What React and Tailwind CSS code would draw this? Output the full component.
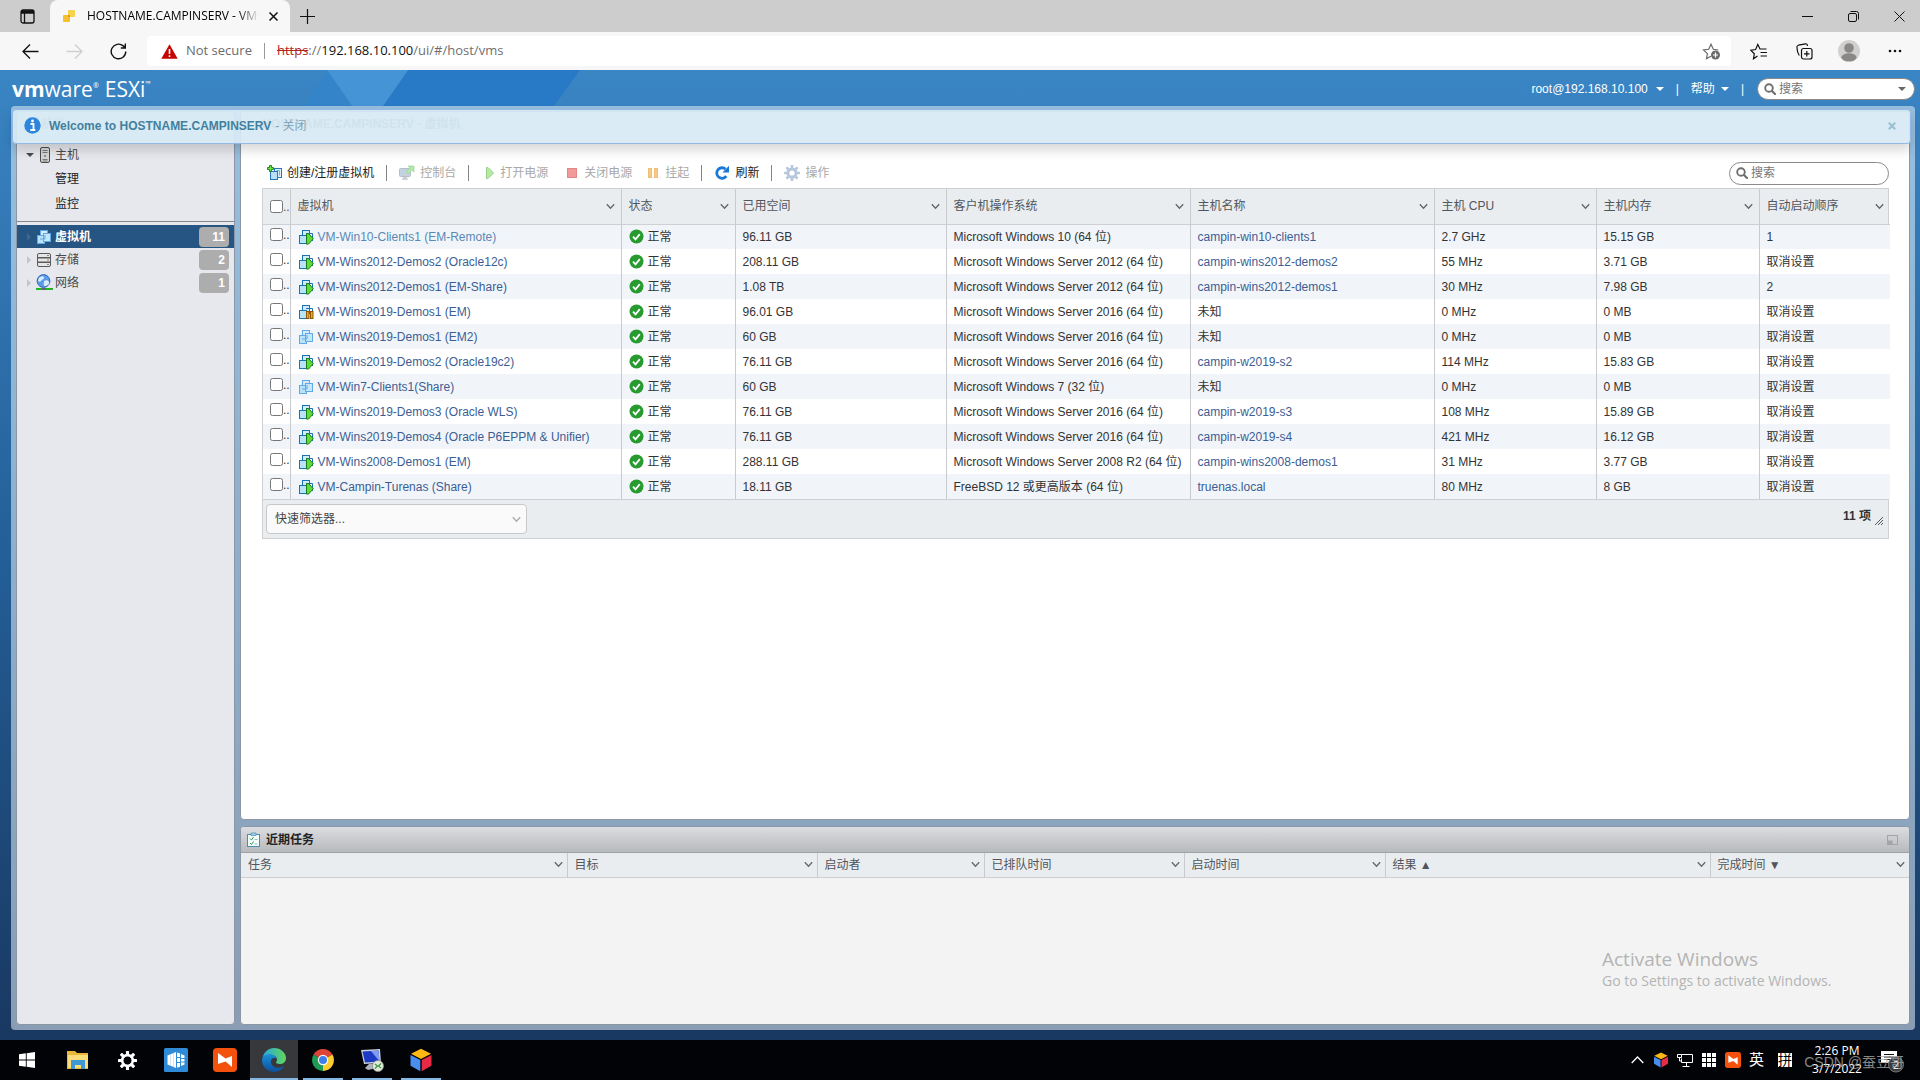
import React from "react";

const vms = [
  ["VM-Win10-Clients1 (EM-Remote)", "on", "96.11 GB", "Microsoft Windows 10 (64 位)", "campin-win10-clients1", "2.7 GHz", "15.15 GB", "1"],
  ["VM-Wins2012-Demos2 (Oracle12c)", "on", "208.11 GB", "Microsoft Windows Server 2012 (64 位)", "campin-wins2012-demos2", "55 MHz", "3.71 GB", "取消设置"],
  ["VM-Wins2012-Demos1 (EM-Share)", "on", "1.08 TB", "Microsoft Windows Server 2012 (64 位)", "campin-wins2012-demos1", "30 MHz", "7.98 GB", "2"],
  ["VM-Wins2019-Demos1 (EM)", "paused", "96.01 GB", "Microsoft Windows Server 2016 (64 位)", "未知", "0 MHz", "0 MB", "取消设置"],
  ["VM-Wins2019-Demos1 (EM2)", "off", "60 GB", "Microsoft Windows Server 2016 (64 位)", "未知", "0 MHz", "0 MB", "取消设置"],
  ["VM-Wins2019-Demos2 (Oracle19c2)", "on", "76.11 GB", "Microsoft Windows Server 2016 (64 位)", "campin-w2019-s2", "114 MHz", "15.83 GB", "取消设置"],
  ["VM-Win7-Clients1(Share)", "off", "60 GB", "Microsoft Windows 7 (32 位)", "未知", "0 MHz", "0 MB", "取消设置"],
  ["VM-Wins2019-Demos3 (Oracle WLS)", "on", "76.11 GB", "Microsoft Windows Server 2016 (64 位)", "campin-w2019-s3", "108 MHz", "15.89 GB", "取消设置"],
  ["VM-Wins2019-Demos4 (Oracle P6EPPM & Unifier)", "on", "76.11 GB", "Microsoft Windows Server 2016 (64 位)", "campin-w2019-s4", "421 MHz", "16.12 GB", "取消设置"],
  ["VM-Wins2008-Demos1 (EM)", "on", "288.11 GB", "Microsoft Windows Server 2008 R2 (64 位)", "campin-wins2008-demos1", "31 MHz", "3.77 GB", "取消设置"],
  ["VM-Campin-Turenas (Share)", "on", "18.11 GB", "FreeBSD 12 或更高版本 (64 位)", "truenas.local", "80 MHz", "8 GB", "取消设置"],
];

const vmColumns = [
  ["虚拟机", "w-[331px]"],
  ["状态", "w-[114px]"],
  ["已用空间", "w-[211px]"],
  ["客户机操作系统", "w-[244px]"],
  ["主机名称", "w-[244px]"],
  ["主机 CPU", "w-[162px]"],
  ["主机内存", "w-[163px]"],
  ["自动启动顺序", "w-[131px]"],
];

const taskColumns = [
  ["任务", "w-[326px]"],
  ["目标", "w-[250px]"],
  ["启动者", "w-[167px]"],
  ["已排队时间", "w-[200px]"],
  ["启动时间", "w-[201px]"],
  ["结果 ▲", "w-[325px]"],
  ["完成时间 ▼", "w-[199px]"],
];

/* ---------- icons ---------- */

function VmIcon({ state = "off" }) {
  const stroke = state === "off" ? "#62a8e6" : "#1a73b4";
  return (
    <svg width="16" height="16" viewBox="0 0 16 16" className="shrink-0" aria-hidden="true">
      <rect x="4.500" y="1.500" width="7" height="8" fill="#d3ecfb" stroke={stroke} />
      <rect x="1.500" y="6.500" width="7" height="8" fill="#b9e3f7" stroke={stroke} />
      {state === "off" ? (
        <g>
          <rect x="7.500" y="4.500" width="7" height="8" fill="#c3e8fa" stroke={stroke} />
          <path d="M4 10h5V6" fill="none" stroke={stroke} />
        </g>
      ) : (
        <path d="M8 4.500h6.500V12" fill="none" stroke={stroke} />
      )}
      {state === "on" && <path d="M8.500 4.500h2l4.800 5.200-4.800 5.400h-2z" fill="#5fdc35" stroke="#1a7d1a" />}
      {state === "paused" && (
        <g fill="#f6a71c" stroke="#8d5606">
          <rect x="8.500" y="7.500" width="2.500" height="7" />
          <rect x="12.500" y="7.500" width="2.500" height="7" />
        </g>
      )}
    </svg>
  );
}

function CreateVmIcon() {
  return (
    <svg width="15" height="16" viewBox="0 0 15 16" aria-hidden="true">
      <rect x="7.500" y="3.500" width="7" height="9" fill="#dff1fc" stroke="#2576b8" />
      <rect x="3.500" y="6.500" width="7" height="8" fill="#b9e0f8" stroke="#2576b8" />
      <path d="M9.500 5.500h3v5" fill="none" stroke="#6eb2e4" />
      <path d="M2.500.5h2v2h2v2h-2v2h-2v-2h-2v-2h2z" fill="#72e04c" stroke="#1f8a1f" />
    </svg>
  );
}

function ConsoleIcon() {
  return (
    <svg width="16" height="16" viewBox="0 0 16 16" className="opacity-60" aria-hidden="true">
      <rect x=".5" y="3.500" width="11" height="8" rx="1" fill="#9db4c9" stroke="#8796a5" />
      <path d="M4 12h4l1 3H3z" fill="#a9b4be" />
      <path d="M9 1h6v6l-2-2-4 4-2-2 4-4z" fill="#7ade6e" stroke="#5cb85c" strokeWidth=".7" />
    </svg>
  );
}

function RefreshIcon() {
  return (
    <svg width="16" height="16" viewBox="0 0 16 16" aria-hidden="true">
      <path d="M12.300 11.200A5.300 5.300 0 1 1 11.500 4" fill="none" stroke="#1c78d6" strokeWidth="2.800" />
      <path d="M15 .8v6.700H8.400z" fill="#1c78d6" />
    </svg>
  );
}

function GearIcon({ color, size = 16, hole = 2.6 }) {
  return (
    <svg width={size} height={size} viewBox="0 0 16 16" aria-hidden="true">
      <g fill={color}>
        {[0, 45, 90, 135].map((a) => (
          <rect key={a} x="6.700" y="0" width="2.600" height="16" rx=".5" transform={"rotate(" + a + " 8 8)"} mask="url(#gear-hole)" />
        ))}
      </g>
      <circle cx="8" cy="8" r={(hole + 5.6) / 2} fill="none" stroke={color} strokeWidth={5.6 - hole} />
      <mask id="gear-hole" maskUnits="userSpaceOnUse" x="-8" y="-8" width="32" height="32">
        <rect x="-8" y="-8" width="32" height="32" fill="#fff" />
        <circle cx="8" cy="8" r="3.500" fill="#000" />
      </mask>
    </svg>
  );
}

function OkIcon() {
  return (
    <svg width="15" height="15" viewBox="0 0 15 15" className="shrink-0" aria-hidden="true">
      <circle cx="7.500" cy="7.500" r="7" fill="#279a30" />
      <path d="M4 7.600l2.500 2.700 4.300-5.200" fill="none" stroke="#fff" strokeWidth="1.800" />
    </svg>
  );
}

function Chevron({ className = "" }) {
  return (
    <svg width="9" height="7" viewBox="0 0 9 7" className={"shrink-0 " + className} aria-hidden="true">
      <path d="M.8 1.300l3.700 4 3.700-4" fill="none" stroke="currentColor" strokeWidth="1.300" />
    </svg>
  );
}

function SearchIcon() {
  return (
    <svg width="12" height="12" viewBox="0 0 12 12" className="shrink-0" aria-hidden="true">
      <circle cx="5" cy="5" r="3.800" fill="none" stroke="#6f6f6f" strokeWidth="1.900" />
      <path d="M8 8l3 3" stroke="#6f6f6f" strokeWidth="2.200" strokeLinecap="round" />
    </svg>
  );
}

function Caret({ className = "" }) {
  return (
    <svg width="8" height="4" viewBox="0 0 8 4" className={"shrink-0 " + className} aria-hidden="true">
      <path d="M0 0h8L4 4z" fill="currentColor" />
    </svg>
  );
}

function CubeIcon({ size }) {
  return (
    <svg width={size} height={size} viewBox="0 0 24 24" aria-hidden="true">
      <path d="M12 .8l10 5-10 5.200-10-5.200z" fill="#fdb813" />
      <path d="M1.500 7l9.800 5v11.300l-9.800-5.600z" fill="#4a8df0" />
      <path d="M22.500 7l-9.800 5v11.300l9.800-5.600z" fill="#e92a45" />
    </svg>
  );
}

function TodeskIcon({ size }) {
  return (
    <svg width={size} height={size} viewBox="0 0 24 24" aria-hidden="true">
      <rect width="24" height="24" rx="4" fill="#f4520c" />
      <path d="M5 5l7.500 5.500L19 8v11l-6.500-5.500L5 16z" fill="#fff" />
    </svg>
  );
}

function MonitorIcon() {
  return (
    <svg width="17" height="15" viewBox="0 0 17 15" fill="none" stroke="#fff" aria-hidden="true">
      <path d="M4.500 1.500h11v8h-11v-4M9.500 9.500v3.500M5.500 13.500h7" />
      <path d="M.5 1.500h4v3h-4zM2.500 4.500v3.500h2" />
    </svg>
  );
}

/* ---------- browser chrome ---------- */

function TabStrip() {
  return (
    <div className="flex h-8 items-stretch bg-[#cdcdcd] text-black">
      <button aria-label="Tab actions" className="flex w-[50px] items-center justify-center pl-1">
        <svg width="15" height="15" viewBox="0 0 15 15" fill="none" stroke="#111" strokeWidth="1.300">
          <rect x="1" y="1" width="13" height="13" rx="2" />
          <path d="M1 3h13" strokeWidth="3.500" />
          <path d="M4.500 4v10" />
        </svg>
      </button>
      <div className="flex w-60 items-center rounded-t-lg bg-[#f7f7f7] pr-2.5 pl-3">
        <svg width="14" height="14" viewBox="0 0 14 14" className="shrink-0" aria-hidden="true">
          <rect x="6" y="1" width="7" height="7" rx="1" fill="#f8d24c" />
          <rect x="1" y="6" width="7" height="7" rx="1" fill="#f5c02e" />
          <rect x="6" y="6" width="2" height="2" fill="#e09a10" />
        </svg>
        <span className="ml-[11px] min-w-0 flex-1 overflow-hidden text-xs whitespace-nowrap [mask-image:linear-gradient(to_right,black_88%,transparent)]">
          HOSTNAME.CAMPINSERV - VMware ESXi
        </span>
        <button aria-label="Close tab" className="ml-2 p-0.5">
          <svg width="9" height="9" viewBox="0 0 9 9" stroke="#111" strokeWidth="1.500">
            <path d="M.5.5l8 8M8.500.5l-8 8" />
          </svg>
        </button>
      </div>
      <button aria-label="New tab" className="flex w-[34px] items-center justify-center">
        <svg width="15" height="15" viewBox="0 0 15 15" stroke="#111" strokeWidth="1.200">
          <path d="M7.500 0v15M0 7.500h15" />
        </svg>
      </button>
      <div className="ml-auto flex">
        <button aria-label="Minimize" className="flex w-[46px] items-center justify-center pl-1">
          <svg width="11" height="11" viewBox="0 0 11 11" stroke="#111"><path d="M0 5.500h11" /></svg>
        </button>
        <button aria-label="Restore" className="flex w-[46px] items-center justify-center pl-1">
          <svg width="11" height="11" viewBox="0 0 11 11" fill="none" stroke="#111">
            <rect x=".5" y="2.500" width="8" height="8" rx="1.500" />
            <path d="M2.500.5h6a2 2 0 0 1 2 2v6" />
          </svg>
        </button>
        <button aria-label="Close" className="flex w-[46px] items-center justify-center pl-1">
          <svg width="11" height="11" viewBox="0 0 11 11" stroke="#111"><path d="M.5.5l10 10M10.500.5l-10 10" /></svg>
        </button>
      </div>
    </div>
  );
}

function AddressBar() {
  return (
    <div className="flex h-[38px] items-center bg-[#f7f7f7] pr-0.5">
      <button aria-label="Back" className="flex w-12 items-center justify-center pl-3">
        <svg width="17" height="15" viewBox="0 0 17 15" fill="none" stroke="#111" strokeWidth="1.300">
          <path d="M16.500 7.500H1M8 .5l-7 7 7 7" />
        </svg>
      </button>
      <button aria-label="Forward" className="flex w-12 items-center justify-center pl-1">
        <svg width="17" height="15" viewBox="0 0 17 15" fill="none" stroke="#cfcfcf" strokeWidth="1.300">
          <path d="M.5 7.500H16M9 .5l7 7-7 7" />
        </svg>
      </button>
      <button aria-label="Reload" className="flex w-12 items-center justify-center pr-1">
        <svg width="17" height="17" viewBox="0 0 17 17" fill="none" stroke="#111" strokeWidth="1.400">
          <path d="M15.800 8.500a7.300 7.300 0 1 1-2.600-5.600L15 4.500M15.300.5v4.500h-4.500" />
        </svg>
      </button>
      <div className="ml-[3px] flex h-[30px] flex-1 items-center rounded bg-white pr-[11px] pl-3.5 text-[13px]">
        <svg width="17" height="15" viewBox="0 0 17 15" className="shrink-0" aria-hidden="true">
          <path d="M8.500.3l8.200 14.400H.3z" fill="#c50500" />
          <path d="M8.500 5v5M8.500 11.300v1.800" stroke="#fff" strokeWidth="1.600" />
        </svg>
        <span className="ml-2 text-[#6b6b6b]">Not secure</span>
        <span className="mx-3 h-4 w-px bg-[#9a9a9a]" />
        <span className="flex-1 text-[#6f6f6f]">
          <span className="text-[#b3261e] line-through">https</span>://<span className="text-[#111]">192.168.10.100</span>/ui/#/host/vms
        </span>
        <button aria-label="Add to favorites">
          <svg width="18" height="18" viewBox="0 0 18 18" fill="none" stroke="#6b6b6b" strokeWidth="1.200">
            <path d="M9 14.200l-4.500 2.400.9-5L1.500 8l5.200-.7L9 2.200l2.300 5.100 5 .7" />
            <circle cx="13.500" cy="13" r="4.500" fill="#6b6b6b" stroke="none" />
            <path d="M13.500 10.500v5M11 13h5" stroke="#fff" />
          </svg>
        </button>
      </div>
      <div className="ml-[5px] flex">
        <button aria-label="Favorites" className="flex w-[46px] items-center justify-center">
          <svg width="18" height="17" viewBox="0 0 18 17" fill="none" stroke="#111" strokeWidth="1.200">
            <path d="M7.500 13l-4 2.800.8-5L.8 7.200l4.800-.7L7.800 1.500 10 6h6.500M10.500 9.500h6.500M10.500 13h6.500" />
          </svg>
        </button>
        <button aria-label="Collections" className="flex w-11 items-center justify-center">
          <svg width="17" height="17" viewBox="0 0 17 17" fill="none" stroke="#111" strokeWidth="1.200">
            <rect x="5.500" y="5.500" width="10.500" height="10.500" rx="2" />
            <path d="M10.800 8v5.500M8 10.800h5.500M3.300 12.500C1.800 10.500 1 7 .9 4c0-1 .6-1.500 1.500-1.800L9.500.8c1-.2 1.700.5 2 2.200" />
          </svg>
        </button>
        <button aria-label="Profile" className="flex w-[46px] items-center justify-center">
          <svg width="22" height="22" viewBox="0 0 22 22">
            <circle cx="11" cy="11" r="11" fill="#d2d0ce" />
            <circle cx="11" cy="8" r="4.800" fill="#8a8886" />
            <ellipse cx="11" cy="17.300" rx="7.500" ry="4" fill="#8a8886" />
          </svg>
        </button>
        <button aria-label="Settings and more" className="flex w-[46px] items-center justify-center">
          <svg width="14" height="4" viewBox="0 0 14 4" fill="#111">
            <circle cx="2" cy="2" r="1.300" /><circle cx="7" cy="2" r="1.300" /><circle cx="12" cy="2" r="1.300" />
          </svg>
        </button>
      </div>
    </div>
  );
}

/* ---------- ESXi client ---------- */

function SearchBox({ label, className, children }) {
  return (
    <label className={"flex items-center rounded-full border border-[#8a8a8a] bg-white pr-2 pl-1.5 " + className}>
      <SearchIcon />
      <input aria-label={label} placeholder="搜索" className="ml-[3px] w-full min-w-0 bg-transparent text-xs outline-none placeholder:text-[#757575]" />
      {children}
    </label>
  );
}

function ClientHeader() {
  return (
    <header className="relative flex h-9 items-center pt-0.5 pr-[5px] pl-3 text-white">
      <svg width="600" height="36" viewBox="0 0 600 36" className="absolute top-0 left-0" aria-hidden="true">
        <path d="M408 0h172l-26 36H383z" fill="#297ac6" />
        <path d="M327 0h81l-25 36h-31z" fill="#4594d5" />
        <path d="M327 0l25 36h-47z" fill="#3384c8" />
      </svg>
      <div className="relative flex items-center font-['Open_Sans',sans-serif] text-xl leading-6">
        <span className="text-[21px] font-bold">vm</span>
        <span className="text-[21px]">ware</span>
        <span className="mb-2 text-[7px] leading-none">®</span>
        <span className="ml-1.5 text-[21px]">ESXi</span>
        <span className="mb-3 text-[7px] leading-none">™</span>
      </div>
      <div className="relative ml-auto flex items-center text-xs">
        <button className="flex items-center gap-2">root@192.168.10.100 <Caret /></button>
        <span className="mx-3">|</span>
        <button className="flex items-center gap-1.5">帮助 <Caret /></button>
        <span className="mx-3">|</span>
        <SearchBox label="全局搜索" className="ml-px h-[22px] w-[158px]">
          <Caret className="text-[#666]" />
        </SearchBox>
      </div>
    </header>
  );
}

function Banner() {
  return (
    <div role="status" className="absolute top-[3px] right-1 left-px z-10 flex h-[35px] items-center rounded border border-[#93b8e4] bg-[#d7e9f4]/92 pr-3.5 pb-0.5 pl-[11px] text-xs text-[#7fa5b8] shadow-[0_6px_12px_rgba(0,0,0,0.16)]">
      <svg width="17" height="17" viewBox="0 0 17 17" className="shrink-0" aria-hidden="true">
        <circle cx="8.500" cy="8.500" r="8.200" fill="#2e86dc" />
        <path d="M6.500 7h3v5.500M6.300 13h5" fill="none" stroke="#fff" strokeWidth="1.800" />
        <circle cx="8.500" cy="4" r="1.400" fill="#fff" />
      </svg>
      <b className="ml-2 text-[#42809f]">Welcome to HOSTNAME.CAMPINSERV</b>
      <span className="ml-1">- <a href="#close">关闭</a></span>
      <button aria-label="关闭通知" className="ml-auto">
        <svg width="8" height="8" viewBox="0 0 8 8" stroke="#9cbfd3" strokeWidth="2.200">
          <path d="M.8.8l6.400 6.400M7.200.8L.8 7.200" />
        </svg>
      </button>
    </div>
  );
}

function TreeArrow({ light }) {
  return (
    <svg width="5" height="8" viewBox="0 0 5 8" aria-hidden="true">
      <path d="M0 0l4 4-4 4z" fill={light ? "#c4c5c9" : "#3d6690"} />
    </svg>
  );
}

function NavRow({ icon, label, count, selected }) {
  return (
    <a
      href="#"
      className={"flex h-[23px] items-center pr-[5px] pl-[10px] " + (selected ? "bg-[#265483] font-bold text-white" : "text-[#4a4a4a]")}
    >
      <TreeArrow light={!selected} />
      <span className="ml-[3px] flex w-[18px] justify-center">{icon}</span>
      <span className="ml-0.5">{label}</span>
      <span className="ml-auto h-5 w-[30px] rounded-sm bg-[#adadad] pr-1 text-right leading-5 font-bold text-white">{count}</span>
    </a>
  );
}

function Navigator() {
  return (
    <nav className="flex w-[219px] shrink-0 flex-col rounded border border-[#8b97a5] bg-[#e7e8ed] text-xs text-[#4a4a4a]">
      <div className="h-[31px] px-3 leading-6 font-bold text-[#aaa]">导航器</div>
      <a href="#" className="flex h-6 items-center pl-[9px]">
        <Caret />
        <svg width="10" height="16" viewBox="0 0 10 16" className="ml-[6px]" aria-hidden="true">
          <rect x=".5" y=".5" width="9" height="15" rx="1.500" fill="#d5d5d5" stroke="#4d4d4d" />
          <path d="M2.500 3.500h5M2.500 5.500h5M2.500 12.500h5M2.500 14h5" stroke="#777" />
          <circle cx="5" cy="9" r="1" fill="#777" />
        </svg>
        <span className="ml-[5px]">主机</span>
      </a>
      <a href="#" className="flex h-[23px] items-center pl-[38px] text-[#222]">管理</a>
      <a href="#" className="flex h-[28px] items-center pl-[38px] text-[#222]">监控</a>
      <div className="mt-[3px] mb-0.5 h-0.5 border-t border-[#85868a]" />
      <NavRow icon={<VmIcon />} label="虚拟机" count="11" selected />
      <NavRow
        label="存储"
        count="2"
        icon={
          <svg width="14" height="14" viewBox="0 0 14 14" aria-hidden="true">
            <rect x=".5" y=".5" width="13" height="13" rx="1.500" fill="#e6e6e6" stroke="#5a5a5a" />
            <path d="M1 4.800h12M1 9.200h12" stroke="#5a5a5a" strokeWidth="1.400" />
            <path d="M10 2.500h2M10 7h2M10 11.500h2" stroke="#888" />
          </svg>
        }
      />
      <NavRow
        label="网络"
        count="1"
        icon={
          <svg width="17" height="17" viewBox="0 0 17 17" aria-hidden="true">
            <circle cx="7.500" cy="7" r="6.400" fill="#5a9be8" stroke="#2c66b8" />
            <path d="M3 4c2-2 4-2 5-1S6 6 5 7 3 8 2 7zM8 7c2-1 4-1 5 1s-2 4-4 4-1-3-1-5z" fill="#d8eafb" />
            <path d="M0 15h6M10 15h7" stroke="#22b422" strokeWidth="2" />
            <path d="M6 15h4" stroke="#666" strokeWidth="2" />
          </svg>
        }
      />
    </nav>
  );
}

function Separator() {
  return <span className="mx-3 h-4 w-px bg-[#858585]" />;
}

function ToolButton({ icon, label, disabled, className = "" }) {
  return (
    <button disabled={disabled} className={"flex items-center gap-[5px] whitespace-nowrap " + (disabled ? "text-[#a9a9a9] " : "text-[#222] ") + className}>
      {icon}
      {label}
    </button>
  );
}

function Toolbar() {
  return (
    <div className="flex h-8 items-center pt-0.5 pl-[5px]">
      <ToolButton icon={<CreateVmIcon />} label="创建/注册虚拟机" />
      <Separator />
      <ToolButton disabled icon={<ConsoleIcon />} label="控制台" />
      <Separator />
      <ToolButton
        disabled
        className="w-[84px] pl-1"
        icon={<svg width="10" height="14" viewBox="0 0 10 14"><path d="M1.500 1.500h1.500l5.500 5.500-5.500 5.500H1.500z" fill="#b4eba0" stroke="#97cf8b" /></svg>}
        label="打开电源"
      />
      <ToolButton
        disabled
        className="w-[81px]"
        icon={<svg width="14" height="12" viewBox="0 0 14 12"><rect x="2.500" y="1.500" width="9" height="9" fill="#f29a9a" stroke="#e58686" /></svg>}
        label="关闭电源"
      />
      <ToolButton
        disabled
        icon={<svg width="14" height="12" viewBox="0 0 14 12" fill="#f5cb86" stroke="#edbd72"><rect x="2.500" y="1.500" width="3" height="9" /><rect x="8.500" y="1.500" width="3" height="9" /></svg>}
        label="挂起"
      />
      <Separator />
      <ToolButton icon={<RefreshIcon />} label="刷新" />
      <Separator />
      <ToolButton disabled icon={<GearIcon color="#b6c8dc" />} label="操作" />
      <SearchBox label="搜索虚拟机" className="ml-auto h-[23px] w-40" />
    </div>
  );
}

function HeadCell({ label, width, className }) {
  return (
    <th className={"border-r border-[#c9cacd] p-0 text-left font-normal last:border-r-0 " + width}>
      <button className={"flex w-full items-center justify-between pl-[7px] " + className}>
        {label}
        <Chevron className="text-[#666]" />
      </button>
    </th>
  );
}

function VmTable() {
  return (
    <div className="border border-[#cfd0d2] bg-[#eaedf0]">
      <table className="w-full table-fixed border-collapse text-xs text-[#333]">
        <thead className="text-[#50565c]">
          <tr className="h-[35px] border-b border-[#cfd0d2]">
            <th className="w-[27px] border-r border-[#c9cacd] p-0 font-normal">
              <span className="flex items-end pl-[7px]">
                <input type="checkbox" aria-label="全选" className="size-[13px] shrink-0" />
                <span className="leading-[11px]">..</span>
              </span>
            </th>
            {vmColumns.map(([label, width]) => (
              <HeadCell key={label} label={label} width={width} className="pr-1.5" />
            ))}
          </tr>
        </thead>
        <tbody>
          {vms.map(([name, state, space, os, host, cpu, mem, order], i) => (
            <tr key={name} className="h-[25px] odd:bg-[#f1f5fa] even:bg-white [&>td]:border-r [&>td]:border-[#c9cacd] [&>td]:py-0 [&>td]:pr-0 [&>td]:pl-[7px] [&>td]:whitespace-nowrap [&>td:last-child]:border-r-0">
              <td>
                <span className="flex items-end pb-1">
                  <input type="checkbox" aria-label={name} className="size-[13px] shrink-0" />
                  <span className="leading-[11px]">..</span>
                </span>
              </td>
              <td>
                <a href="#" className={"flex items-center gap-1 " + (i === 0 ? "text-[#5a88b4]" : "text-[#3c5d92]")}>
                  <VmIcon state={state} />
                  {name}
                </a>
              </td>
              <td>
                <span className="flex items-center gap-1"><OkIcon />正常</span>
              </td>
              <td>{space}</td>
              <td>{os}</td>
              <td>{host === "未知" ? host : <a href="#" className="text-[#3c5d92]">{host}</a>}</td>
              <td>{cpu}</td>
              <td>{mem}</td>
              <td>{order}</td>
            </tr>
          ))}
        </tbody>
      </table>
      <div className="flex h-[39px] items-start border-t border-[#cfd0d2] px-[3px] pt-1 text-xs">
        <div className="relative flex items-center">
          <select aria-label="快速筛选器" className="h-[30px] w-[261px] appearance-none rounded-sm border border-[#c8c9cb] bg-[#fafafa] px-2 text-[#444]">
            <option>快速筛选器...</option>
          </select>
          <Chevron className="absolute right-1.5 text-[#aaa]" />
        </div>
        <span className="ml-auto pt-1 font-bold text-[#333]">11 项</span>
        <svg width="8" height="8" viewBox="0 0 8 8" className="mt-[13px] mr-0.5 ml-1" aria-hidden="true">
          <path d="M0 8L8 0M3 8l5-5M6 8l2-2" stroke="#555" />
        </svg>
      </div>
    </div>
  );
}

function RecentTasks() {
  return (
    <section className="flex h-[199px] flex-col overflow-hidden rounded border border-[#8b97a5] bg-[#f3f3f3] text-xs">
      <div className="flex h-[26px] items-center border-b border-[#9fa1a5] bg-linear-to-b from-[#dcdde1] to-[#b8b9bc] pr-[11px] pl-1.5">
        <svg width="13" height="15" viewBox="0 0 13 15" aria-hidden="true">
          <rect x=".5" y="2.500" width="12" height="12" fill="#f3fafd" stroke="#4a8db0" />
          <path d="M4 1h5v2.500H4z" fill="#9fd0ea" stroke="#4a8db0" strokeWidth=".7" />
          <path d="M3 6.500l1.500 1.500 2-3M3 11l1.500 1.500 2-3" fill="none" stroke="#2ea043" />
          <path d="M7.500 7.500h3M7.500 12h3" stroke="#9bc" />
        </svg>
        <h2 className="ml-1.5 font-bold text-[#222]">近期任务</h2>
        <button aria-label="展开" className="ml-auto">
          <svg width="11" height="10" viewBox="0 0 11 10"><rect x=".5" y=".5" width="10" height="9" fill="none" stroke="#a3a4a8" /><path d="M1 5.500h4.500V9H1z" fill="#a3a4a8" /></svg>
        </button>
      </div>
      <table className="w-full table-fixed border-collapse text-[#50565c]">
        <thead>
          <tr className="h-6 border-b border-[#cfd0d2] bg-[#eaedf0]">
            {taskColumns.map(([label, width]) => (
              <HeadCell key={label} label={label} width={width} className="pr-1" />
            ))}
          </tr>
        </thead>
      </table>
    </section>
  );
}

/* ---------- desktop ---------- */

function Watermark() {
  return (
    <div className="pointer-events-none absolute right-[70px] bottom-[49px] z-10 w-[248px] font-['Open_Sans',sans-serif] text-[#b4b4b4]">
      <p className="text-[19px] leading-6">Activate Windows</p>
      <p className="text-sm leading-5 whitespace-nowrap">Go to Settings to activate Windows.</p>
    </div>
  );
}

function TaskButton({ label, children, running, active }) {
  return (
    <button aria-label={label} className={"flex w-12 flex-col items-center " + (active ? "bg-[#37383b]" : "")}>
      <span className="flex flex-1 items-center pt-0.5">{children}</span>
      <span className={"h-0.5 " + (active ? "w-12 " : "w-10 ") + (running ? "bg-[#83b9e4]" : "")} />
    </button>
  );
}

function Taskbar() {
  return (
    <footer className="relative flex h-10 items-stretch bg-[#020306] text-white">
      <button aria-label="Start" className="flex w-[54px] items-center justify-center">
        <svg width="16" height="16" viewBox="0 0 16 16" fill="#fff">
          <path d="M0 2.300l6.800-1v6.200H0zM7.700 1.200L16 0v7.500H7.700zM0 8.500h6.800v6.200l-6.800-1zM7.700 8.500H16V16l-8.300-1.200z" />
        </svg>
      </button>
      <div className="flex gap-px">
        <TaskButton label="File Explorer">
          <svg width="22" height="20" viewBox="0 0 22 20">
            <path d="M0 1h8l2 2h11v16H0z" fill="#e9b63a" />
            <path d="M1 5h20v13H1z" fill="#fbdb7a" />
            <path d="M4 10h14v9h-4v-4H8v4H4z" fill="#3f97d3" />
          </svg>
        </TaskButton>
        <TaskButton label="Settings"><GearIcon color="#fff" size={19} hole={3.6} /></TaskButton>
        <TaskButton label="Server Manager">
          <svg width="24" height="24" viewBox="0 0 24 24">
            <rect width="24" height="24" rx="1.500" fill="#2f8ad8" />
            <path d="M3.500 7.500L12 4v16l-8.500-3.500z" fill="#fff" />
            <path d="M13 4.500l3 1V9h-3zM17 6l3.500 1.500V10H17zM13 10h3v4h-3zM17 11h3.500v2.500H17zM13 15h3v3.700l-3 1zM17 14.500h3.500v2L17 18z" fill="#fff" />
            <path d="M6.500 6v12M9.500 5v14" stroke="#9fcaf0" strokeWidth=".5" />
          </svg>
        </TaskButton>
        <TaskButton label="ToDesk"><TodeskIcon size={24} /></TaskButton>
        <TaskButton label="Edge" running active>
          <svg width="24" height="24" viewBox="0 0 24 24">
            <defs>
              <linearGradient id="edge-top" x1="0" x2="1"><stop offset="0" stopColor="#2aa5de" /><stop offset="1" stopColor="#5fd85a" /></linearGradient>
              <linearGradient id="edge-low" x1="0" x2="0" y2="1"><stop offset="0" stopColor="#1b8fd8" /><stop offset="1" stopColor="#0c4f9e" /></linearGradient>
            </defs>
            <path d="M.6 9.500C2 4 6.500 0 12 0c7 0 12 5 12 10 0 4-3 6-6.300 6-2.500 0-4-1-3.700-2 1-1 1.200-2 1-3.200C14 7 7 4.500.6 9.500z" fill="url(#edge-top)" />
            <path d="M0 12C.5 7.500 4.500 6 8.500 6.300c3.500.2 6 2.200 6.400 4.500-1.500-1.800-4.400-1.500-5.600 1C7.600 16 12 20.500 17 19.800c2.500-.3 4-1.200 5.200-1.800C20 21.800 16.300 24 12 24 5 24-.3 18.500 0 12z" fill="url(#edge-low)" />
          </svg>
        </TaskButton>
        <TaskButton label="Chrome" running>
          <svg width="22" height="22" viewBox="0 0 22 22">
            <path d="M11 11L1.500 5.500a11 11 0 0 1 19 0z" fill="#dd4437" />
            <path d="M11 11l9.500-5.500A11 11 0 0 1 11 22z" fill="#fccd2e" />
            <path d="M11 11v11A11 11 0 0 1 1.500 5.500z" fill="#219a54" />
            <circle cx="11" cy="11" r="5.200" fill="#fff" />
            <circle cx="11" cy="11" r="4" fill="#3f7de8" />
          </svg>
        </TaskButton>
        <TaskButton label="Remote Desktop" running>
          <svg width="24" height="24" viewBox="0 0 24 24">
            <path d="M1 2l19-1 1 14-17 1z" fill="#c9d0dc" />
            <path d="M2.500 3.500l16-1 1 11-14.500 1z" fill="#1c39c4" />
            <path d="M11 3l7.500-.5 1 11z" fill="#7f9bee" />
            <path d="M9 16h6l2 4-9 2-3-2z" fill="#aeb4bf" />
            <circle cx="18" cy="18" r="5.500" fill="#e4e9dd" stroke="#8a928a" strokeWidth=".7" />
            <path d="M15 16l2.500 2-2.500 2.500M21 15.500L18.500 18l2.500 2" fill="none" stroke="#3c9a3c" strokeWidth="1.300" />
          </svg>
        </TaskButton>
        <TaskButton label="Cube" running><CubeIcon size={24} /></TaskButton>
      </div>
      <div className="ml-auto flex items-center gap-2">
        <button aria-label="Show hidden icons">
          <svg width="13" height="8" viewBox="0 0 13 8" fill="none" stroke="#fff" strokeWidth="1.300"><path d="M.7 7l5.800-6 5.800 6" /></svg>
        </button>
        <span className="ml-px"><CubeIcon size={16} /></span>
        <MonitorIcon />
        <svg width="15" height="15" viewBox="0 0 15 15" fill="#fff" aria-hidden="true">
          {[0, 5, 10].map((x) => [0, 5, 10].map((y) => <rect key={x + "-" + y} x={x} y={y} width="4" height="4" />))}
        </svg>
        <TodeskIcon size={16} />
        <span className="text-[15px] leading-5">英</span>
        <span className="ml-1.5 bg-white text-[14px] leading-[14px] text-black">拼</span>
        <time className="ml-0.5 w-[70px] text-center font-['Open_Sans',sans-serif] text-xs leading-[18px]">
          2:26 PM
          <br />
          3/7/2022
        </time>
        <button aria-label="Notifications" className="mr-3.5">
          <svg width="26" height="26" viewBox="0 0 26 26">
            <path d="M1 4h16v12h-5l-3 3v-3H1z" fill="#fff" />
            <path d="M4 7.500h10M4 10h10M4 12.500h6" stroke="#111" />
            <circle cx="16" cy="17.500" r="7.500" fill="#3a3a3c" stroke="#777" />
            <text x="16" y="21.500" textAnchor="middle" fontSize="11" fill="#fff">2</text>
          </svg>
        </button>
      </div>
      <span className="pointer-events-none absolute right-4 bottom-1.5 text-sm leading-6 whitespace-nowrap text-[#a9a9a9]/80">CSDN @蚕豆哥</span>
    </footer>
  );
}

export default function App() {
  return (
    <div className="flex min-h-screen flex-col font-['Liberation_Sans','Noto_Sans_CJK_SC',sans-serif]">
      <div className="font-['Open_Sans','Noto_Sans_CJK_SC',sans-serif]">
        <TabStrip />
        <AddressBar />
      </div>
      <div className="relative flex flex-1 flex-col bg-linear-to-b from-[#3a85c4] via-[#235f98] to-[#193861] pb-2.5">
        <ClientHeader />
        <div className="relative mr-[5px] ml-[11px] flex flex-1 gap-[5px] rounded bg-[#e6f0f7]/55 p-[5px]">
          <Banner />
          <Navigator />
          <div className="flex min-w-0 flex-1 flex-col gap-1.5">
            <main className="flex-1 rounded border border-[#8b97a5] bg-white pr-5 pl-[21px] text-xs">
              <h1 className="h-11 leading-6 font-bold text-[#888]">HOSTNAME.CAMPINSERV - 虚拟机</h1>
              <Toolbar />
              <VmTable />
            </main>
            <RecentTasks />
          </div>
        </div>
        <Watermark />
      </div>
      <Taskbar />
    </div>
  );
}
